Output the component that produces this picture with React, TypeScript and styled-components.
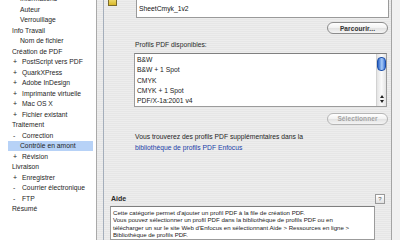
import React from 'react';
import styled, { createGlobalStyle } from 'styled-components';

// Base page reset
const GlobalStyle = createGlobalStyle`
  html, body {
    margin: 0;
    padding: 0;
    overflow: hidden;
    background: #ececec;
  }
  body {
    font-family: 'Liberation Sans', Arial, sans-serif;
    -webkit-font-smoothing: antialiased;
  }
`;

const pinstripe = `repeating-linear-gradient(180deg, #ededed 0px, #ededed 1px, #e6e6e6 1px, #e6e6e6 2px)`;

const Window = styled.div`
  display: flex;
  width: 400px;
  height: 240px;
  overflow: hidden;
  background: ${pinstripe};
`;

// Left tree of categories
const Sidebar = styled.div`
  width: 96px;
  flex: none;
  background: #ffffff;
  border-right: 1px solid #a9a9a9;
  overflow: hidden;
`;

const TreeList = styled.div`
  display: flex;
  flex-direction: column;
  margin-top: -6.5px;
`;

const TreeRow = styled.div<{ $indent: number; $selected?: boolean }>`
  display: flex;
  align-items: center;
  height: 10.5px;
  margin: 0 3px 0 8px;
  padding-left: ${(p) => p.$indent}px;
  font-size: 6.75px;
  color: #1e1e1e;
  white-space: nowrap;
  background: ${(p) => (p.$selected ? '#b7d2f7' : 'transparent')};
`;

const Sign = styled.span`
  display: inline-block;
  width: 9px;
  text-align: left;
  font-size: 7px;
`;

// Right content panel
const Panel = styled.div`
  width: 287px;
  flex: none;
  margin-left: 6px;
  border-left: 1px solid #a4aebb;
  border-right: 1px solid #a4a4a4;
  display: flex;
  flex-direction: column;
`;

const RightEdge = styled.div`
  flex: 1;
  background: #f1f1f1;
`;

const TopRow = styled.div`
  display: flex;
  align-items: flex-start;
  margin-top: -4px;
  padding: 0 2px 0 4px;
`;

const FileIcon = styled.div`
  width: 7px;
  height: 8px;
  margin-right: 19px;
  background: linear-gradient(180deg, #f6e98a, #d9b82a);
  border: 1px solid #7a6a2a;
`;

const TextField = styled.div`
  flex: 1;
  height: 17px;
  margin-top: 2px;
  display: flex;
  align-items: center;
  padding: 1px 0 0 2px;
  background: #ffffff;
  border: 1px solid #9a9a9a;
  border-top-color: #7d7d7d;
  font-size: 6.75px;
  color: #111;
`;

const ButtonRow = styled.div<{ $top: number }>`
  display: flex;
  justify-content: flex-end;
  margin-top: ${(p) => p.$top}px;
  padding-right: 3px;
`;

const PillButton = styled.div<{ $disabled?: boolean }>`
  width: 59px;
  height: 10px;
  display: flex;
  align-items: center;
  justify-content: center;
  border-radius: 6px;
  border: 1px solid ${(p) => (p.$disabled ? '#b5b5b5' : '#8c8c8c')};
  background: linear-gradient(180deg, #ffffff 0%, #f1f1f1 50%, #e2e2e2 51%, #f4f4f4 100%);
  font-size: 6.5px;
  font-weight: bold;
  color: ${(p) => (p.$disabled ? '#a3a3a3' : '#333333')};
  letter-spacing: 0.1px;
`;

const Label = styled.div<{ $top: number; $left: number }>`
  margin-top: ${(p) => p.$top}px;
  padding-left: ${(p) => p.$left}px;
  font-size: 6.75px;
  line-height: 10px;
  color: #2a2a2a;
`;

const ProfileList = styled.div`
  display: flex;
  height: 52px;
  margin: 3px 4px 0 30px;
  background: #ffffff;
  border: 1px solid #9b9b9b;
  border-top-color: #808080;
`;

const ListItems = styled.div`
  flex: 1;
  padding: 0.5px 0 0 2px;
`;

const ListItem = styled.div`
  height: 10.3px;
  display: flex;
  align-items: center;
  font-size: 6.75px;
  color: #1a1a1a;
  white-space: nowrap;
`;

const ScrollTrack = styled.div`
  width: 9px;
  flex: none;
  border-left: 1px solid #d2d2d2;
  background: linear-gradient(90deg, #e4e4e4, #fafafa 50%, #e4e4e4);
  display: flex;
  flex-direction: column;
  align-items: center;
`;

const ScrollThumb = styled.div`
  width: 7px;
  height: 12px;
  margin-top: 3px;
  border-radius: 4px;
  border: 0.5px solid #1c4ea8;
  background: linear-gradient(90deg, #2d63c6 0%, #8fbaf2 45%, #a9cbf7 55%, #3b74d6 100%);
`;

const ScrollArrows = styled.div`
  margin-top: auto;
  margin-bottom: 3px;
  display: flex;
  flex-direction: column;
  align-items: center;
  gap: 2px;
`;

const Arrow = styled.div<{ $down?: boolean }>`
  width: 0;
  height: 0;
  border-left: 2px solid transparent;
  border-right: 2px solid transparent;
  ${(p) => (p.$down ? 'border-top: 3px solid #222;' : 'border-bottom: 3px solid #222;')}
`;

const InfoText = styled.div`
  margin-top: 6px;
  padding-left: 31px;
  font-size: 6.75px;
  line-height: 11px;
  color: #1e1e1e;
`;

const LinkText = styled.div`
  color: #2240a8;
`;

const HelpHeader = styled.div`
  display: flex;
  align-items: center;
  justify-content: space-between;
  margin-top: 41px;
  padding: 0 6px 0 7px;
  height: 10px;
`;

const HelpTitle = styled.div`
  font-size: 7px;
  font-weight: bold;
  color: #2a2a2a;
`;

const HelpButton = styled.div`
  width: 8px;
  height: 8px;
  display: flex;
  align-items: center;
  justify-content: center;
  border: 1px solid #9a9a9a;
  background: linear-gradient(180deg, #ffffff, #e2e2e2);
  font-size: 6px;
  color: #555;
`;

const HelpBox = styled.div`
  margin: 2px 16px 0 6px;
  height: 45px;
  padding: 2px 0 0 2px;
  background: #ffffff;
  border: 1px solid #9b9b9b;
  border-top-color: #7f7f7f;
  font-size: 6.1px;
  line-height: 7.5px;
  color: #1a1a1a;
  white-space: nowrap;
  overflow: hidden;
`;

type TreeItem = { label: string; indent?: number; sign?: string; selected?: boolean };

const tree: TreeItem[] = [
  { label: 'Informations', indent: 12 },
  { label: 'Auteur', indent: 12 },
  { label: 'Verrouillage', indent: 12 },
  { label: 'Info Travail', indent: 4 },
  { label: 'Nom de fichier', indent: 12 },
  { label: 'Création de PDF', indent: 4 },
  { label: 'PostScript vers PDF', sign: '+' },
  { label: 'QuarkXPress', sign: '+' },
  { label: 'Adobe InDesign', sign: '+' },
  { label: 'Imprimante virtuelle', sign: '+' },
  { label: 'Mac OS X', sign: '+' },
  { label: 'Fichier existant', sign: '+' },
  { label: 'Traitement', indent: 4 },
  { label: 'Correction', sign: '-' },
  { label: 'Contrôle en amont', indent: 12, selected: true },
  { label: 'Révision', sign: '+' },
  { label: 'Livraison', indent: 4 },
  { label: 'Enregistrer', sign: '+' },
  { label: 'Courrier électronique', sign: '-' },
  { label: 'FTP', sign: '-' },
  { label: 'Résumé', indent: 4 },
];

const profiles = ['B&W', 'B&W + 1 Spot', 'CMYK', 'CMYK + 1 Spot', 'PDF/X-1a:2001 v4'];

const App: React.FC = () => {
  return (
    <>
      <GlobalStyle />
      <Window>
        <Sidebar>
          <TreeList>
            {tree.map((item) => (
              <TreeRow key={item.label} $indent={item.sign ? 5 : item.indent ?? 4} $selected={item.selected}>
                {item.sign && <Sign>{item.sign}</Sign>}
                {item.label}
              </TreeRow>
            ))}
          </TreeList>
        </Sidebar>

        <Panel>
          <TopRow>
            <FileIcon />
            <TextField>SheetCmyk_1v2</TextField>
          </TopRow>
          <ButtonRow $top={4}>
            <PillButton>Parcourir...</PillButton>
          </ButtonRow>

          <Label $top={6} $left={31}>Profils PDF disponibles:</Label>
          <ProfileList>
            <ListItems>
              {profiles.map((p) => (
                <ListItem key={p}>{p}</ListItem>
              ))}
            </ListItems>
            <ScrollTrack>
              <ScrollThumb />
              <ScrollArrows>
                <Arrow />
                <Arrow $down />
              </ScrollArrows>
            </ScrollTrack>
          </ProfileList>
          <ButtonRow $top={6}>
            <PillButton $disabled>Sélectionner</PillButton>
          </ButtonRow>

          <InfoText>
            Vous trouverez des profils PDF supplémentaires dans la
            <LinkText>bibliothèque de profils PDF Enfocus</LinkText>
          </InfoText>

          <HelpHeader>
            <HelpTitle>Aide</HelpTitle>
            <HelpButton>?</HelpButton>
          </HelpHeader>
          <HelpBox>
            Cette catégorie permet d'ajouter un profil PDF à la file de création PDF.
            <br />
            Vous pouvez sélectionner un profil PDF dans la bibliothèque de profils PDF ou en
            <br />
            télécharger un sur le site Web d'Enfocus en sélectionnant Aide &gt; Ressources en ligne &gt;
            <br />
            Bibliothèque de profils PDF.
          </HelpBox>
        </Panel>
        <RightEdge />
      </Window>
    </>
  );
};

export default App;
